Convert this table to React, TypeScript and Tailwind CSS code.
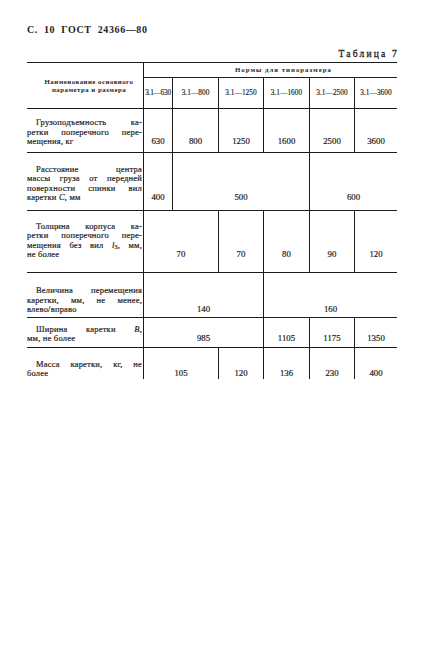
import type { ReactNode } from 'react'

const serif = { fontFamily: '"Liberation Serif", "DejaVu Serif", serif' }

function Label({ lines, pb }: { lines: ReactNode[]; pb: string }) {
  return (
    <td className={`border-t border-[#1c1c1c] pr-[1px] align-bottom text-[8.5px] leading-[9.2px] tracking-[0.2px] text-[#1e1e1e] [-webkit-text-stroke:0.2px_#1e1e1e] ${pb}`}>
      {lines.map((l, i) => (
        <span
          key={i}
          className={
            i < lines.length - 1
              ? `block text-justify [text-align-last:justify] ${i === 0 ? 'indent-[9px]' : ''}`
              : `block text-left ${i === 0 ? 'indent-[9px]' : ''}`
          }
        >
          {l}
        </span>
      ))}
    </td>
  )
}

function V({ children, span = 1, pb }: { children: ReactNode; span?: number; pb: string }) {
  return (
    <td
      colSpan={span}
      className={`border-l border-t border-[#1c1c1c] text-center align-bottom text-[8.8px] leading-[9.2px] text-[#1e1e1e] [-webkit-text-stroke:0.2px_#1e1e1e] ${pb}`}
    >
      {children}
    </td>
  )
}

const sizes = ['3.1—630', '3.1—800', '3.1—1250', '3.1—1600', '3.1—2500', '3.1—3600']

export default function App() {
  return (
    <div className="h-[646px] w-[429px] bg-white pl-[27px] pt-[24px] text-[#1e1e1e]" style={serif}>
      <div className="text-[10px] font-bold leading-[12px] tracking-[0.6px] [word-spacing:3px]">С. 10 ГОСТ 24366—80</div>

      <div className="mt-[13px] w-[372px] text-right text-[9.5px] leading-[10px] tracking-[2.2px] [-webkit-text-stroke:0.3px_#1e1e1e]">
        Таблица 7
      </div>

      <table className="mt-[3px] w-[370px] table-fixed border-separate border-spacing-0">
        <colgroup>
          <col className="w-[116px]" />
          <col className="w-[29px]" />
          <col className="w-[46px]" />
          <col className="w-[45px]" />
          <col className="w-[46px]" />
          <col className="w-[45px]" />
          <col className="w-[43px]" />
        </colgroup>
        <tbody>
          <tr className="h-[15px]">
            <td
              rowSpan={2}
              className="border-t-[1.5px] border-[#1c1c1c] pl-[8px] text-center align-middle text-[6.8px] font-bold leading-[8px] tracking-[0.5px]"
            >
              Наименование основного
              <br />
              параметра и размера
            </td>
            <td
              colSpan={6}
              className="border-l border-t-[1.5px] border-[#1c1c1c] pl-[26px] text-center align-middle text-[6.8px] font-bold leading-[8px] tracking-[1px]"
            >
              Нормы для типоразмера
            </td>
          </tr>
          <tr className="h-[31px]">
            {sizes.map((s, i) => (
              <td
                key={s}
                className={`overflow-visible whitespace-nowrap border-l border-t border-[#1c1c1c] text-center align-middle text-[7.4px] leading-[8px] [-webkit-text-stroke:0.15px_#1e1e1e] ${i === 0 ? 'tracking-[-0.3px]' : ''}`}
              >
                {s}
              </td>
            ))}
          </tr>

          <tr className="h-[43.5px]">
            <Label pb="pb-[5.5px]" lines={['Грузоподъемность ка-', 'ретки поперечного пере-', 'мещения, кг']} />
            <V pb="pb-[5.5px]">630</V>
            <V pb="pb-[5.5px]">800</V>
            <V pb="pb-[5.5px]">1250</V>
            <V pb="pb-[5.5px]">1600</V>
            <V pb="pb-[5.5px]">2500</V>
            <V pb="pb-[5.5px]">3600</V>
          </tr>

          <tr className="h-[58.5px]">
            <Label
              pb="pb-[8px]"
              lines={[
                'Расстояние центра',
                'массы груза от передней',
                'поверхности спинки вил',
                <>
                  каретки <i>C</i>, мм
                </>,
              ]}
            />
            <V pb="pb-[8px]">400</V>
            <V pb="pb-[8px]" span={3}>
              500
            </V>
            <V pb="pb-[8px]" span={2}>
              600
            </V>
          </tr>

          <tr className="h-[62px]">
            <Label
              pb="pb-[13px]"
              lines={[
                'Толщина корпуса ка-',
                'ретки поперечного пере-',
                <>
                  мещения без вил <i>l</i>
                  <sub className="text-[6px]">3</sub>, мм,
                </>,
                'не более',
              ]}
            />
            <V pb="pb-[13px]" span={2}>
              70
            </V>
            <V pb="pb-[13px]">70</V>
            <V pb="pb-[13px]">80</V>
            <V pb="pb-[13px]">90</V>
            <V pb="pb-[13px]">120</V>
          </tr>

          <tr className="h-[45px]">
            <Label pb="pb-[3px]" lines={['Величина перемещения', 'каретки, мм, не менее,', 'влево/вправо']} />
            <V pb="pb-[3px]" span={3}>
              140
            </V>
            <V pb="pb-[3px]" span={3}>
              160
            </V>
          </tr>

          <tr className="h-[30px]">
            <Label
              pb="pb-[4px]"
              lines={[
                <>
                  Ширина каретки <i>B</i>,
                </>,
                'мм, не более',
              ]}
            />
            <V pb="pb-[4px]" span={3}>
              985
            </V>
            <V pb="pb-[4px]">1105</V>
            <V pb="pb-[4px]">1175</V>
            <V pb="pb-[4px]">1350</V>
          </tr>

          <tr className="h-[32px]">
            <Label pb="pb-[1px]" lines={['Масса каретки, кг, не', 'более']} />
            <V pb="pb-[1px]" span={2}>
              105
            </V>
            <V pb="pb-[1px]">120</V>
            <V pb="pb-[1px]">136</V>
            <V pb="pb-[1px]">230</V>
            <V pb="pb-[1px]">400</V>
          </tr>
        </tbody>
      </table>
    </div>
  )
}
